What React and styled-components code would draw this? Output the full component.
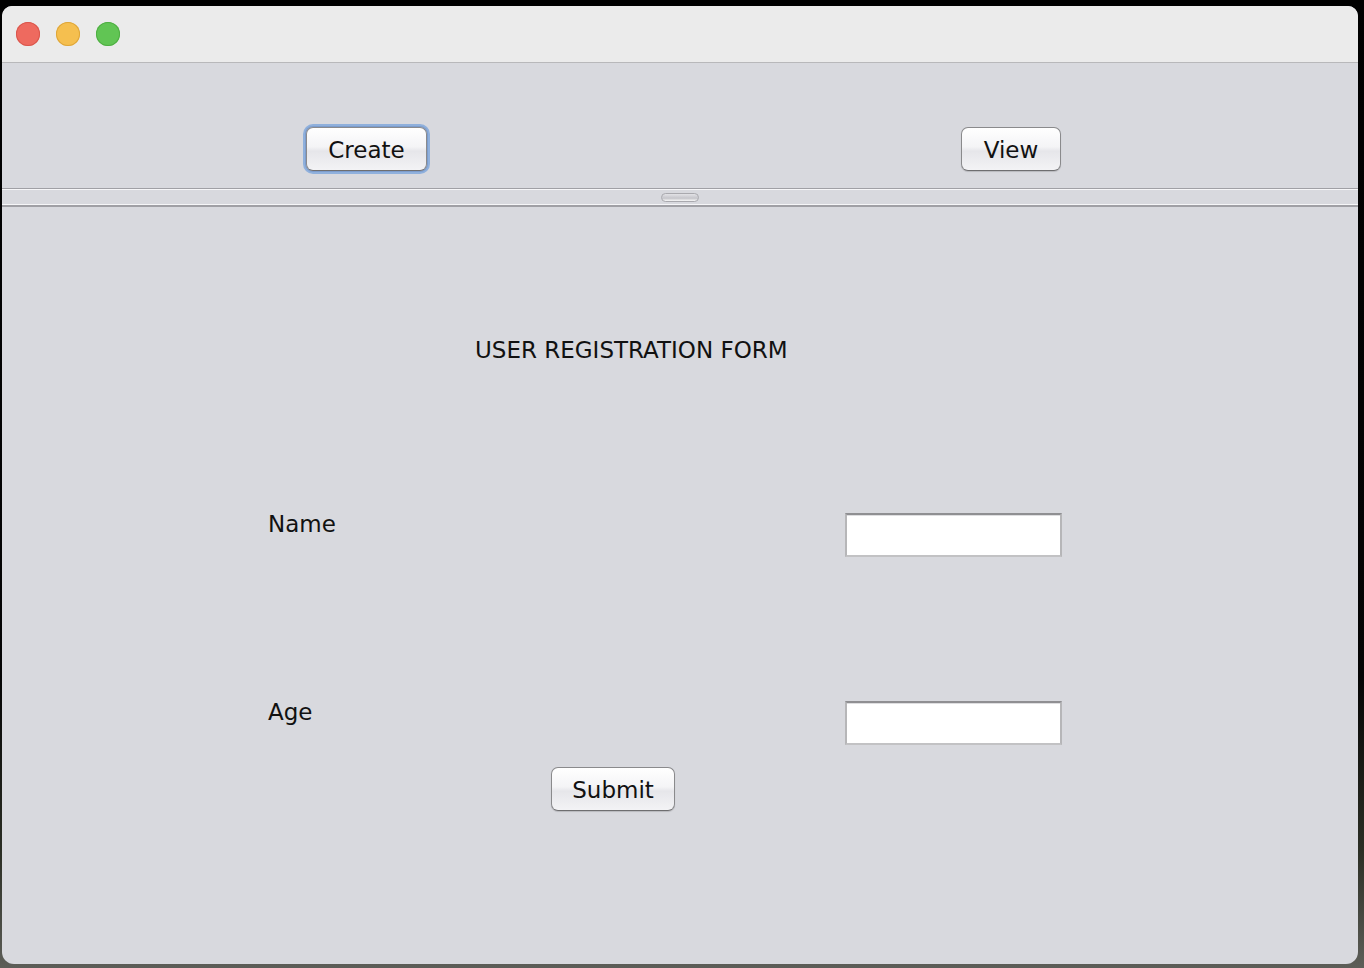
import React from "react";
import styled, { createGlobalStyle } from "styled-components";

const Global = createGlobalStyle`
  html, body { margin: 0; padding: 0; }
  body {
    width: 1364px;
    height: 968px;
    overflow: hidden;
    background: linear-gradient(to bottom, #000 0%, #050505 70%, #2c2f25 88%, #5d5e58 100%);
    font-family: "DejaVu Sans", "Liberation Sans", sans-serif;
  }
  #root { padding: 6px 6px 4px 2px; }
`;

const Window = styled.div`
  width: 1356px;
  height: 958px;
  border-radius: 10px 10px 12px 12px;
  overflow: hidden;
  background: #d8d9de;
  display: flex;
  flex-direction: column;
`;

const TitleBar = styled.div`
  height: 56px;
  flex: none;
  background: #ebebeb;
  border-bottom: 1px solid #b8b8ba;
  display: flex;
  align-items: center;
  padding-left: 14px;
  gap: 16px;
`;

const Light = styled.span`
  width: 24px;
  height: 24px;
  border-radius: 50%;
  background: ${(p) => p.$c};
  box-shadow: inset 0 0 0 1px ${(p) => p.$b};
`;

const TopPane = styled.div`
  height: 125px;
  flex: none;
  display: flex;
  align-items: flex-start;
  padding-top: 64px;
  padding-left: 304px;
  gap: 534px;
  box-sizing: border-box;
`;

const Button = styled.button`
  height: 44px;
  width: ${(p) => p.$w}px;
  box-sizing: border-box;
  border: 1px solid #8a8a8c;
  border-bottom-color: #6e6e70;
  border-radius: 7px;
  background: linear-gradient(to bottom, #ffffff 0%, #f4f4f6 45%, #e6e6ea 55%, #f3f3f5 100%);
  font-family: "DejaVu Sans", "Liberation Sans", sans-serif;
  font-size: 23px;
  color: #111;
  padding: 3px 0 0;
  line-height: 1;
  box-shadow: ${(p) =>
    p.$focus
      ? "0 0 0 1px #7c9ccc, 0 0 0 3px #8fb0dc"
      : "0 1px 1px rgba(0,0,0,0.15)"};
`;

const Divider = styled.div`
  height: 19px;
  flex: none;
  box-sizing: border-box;
  border-top: 1px solid #a0a0a5;
  border-bottom: 2px solid #a0a0a5;
  box-shadow: inset 0 1px 0 #f6f6f8, inset 0 -1px 0 #f6f6f8;
  display: flex;
  align-items: center;
  justify-content: center;
`;

const Handle = styled.div`
  width: 38px;
  height: 9px;
  box-sizing: border-box;
  border-radius: 5px;
  border: 1px solid #a9a9ae;
  background: linear-gradient(to bottom, #e2e2e6 0%, #c5c5ca 60%, #f8f8f8 100%);
  margin-top: 1px;
`;

const FormPane = styled.div`
  flex: 1;
  display: flex;
  flex-direction: column;
  align-items: flex-start;
  padding-left: 266px;
`;

const Heading = styled.div`
  font-size: 23px;
  line-height: 26px;
  color: #111;
  margin-top: 130px;
  margin-left: 207px;
  white-space: nowrap;
`;

const Row = styled.div`
  display: flex;
  align-items: flex-start;
  margin-top: ${(p) => p.$mt}px;
`;

const Label = styled.label`
  width: 577px;
  font-size: 23px;
  line-height: 26px;
  color: #111;
  margin-top: -2px;
`;

const Field = styled.input`
  width: 217px;
  height: 44px;
  box-sizing: border-box;
  border: 2px solid #b6b6b8;
  border-top-color: #8f8f92;
  border-bottom-color: #c2c2c4;
  background: #fff;
  box-shadow: inset 0 1px 0 #dedee0;
  outline: none;
  padding: 0 6px;
  font-size: 20px;
`;

const SubmitWrap = styled.div`
  margin-top: 22px;
  margin-left: 283px;
`;

export default function App() {
  return (
    <>
      <Global />
      <Window>
        <TitleBar>
          <Light $c="#ee6a5f" $b="#d9574d" />
          <Light $c="#f5bf4f" $b="#dea63a" />
          <Light $c="#61c554" $b="#4fae43" />
        </TitleBar>
        <TopPane>
          <Button $w={121} $focus>Create</Button>
          <Button $w={100}>View</Button>
        </TopPane>
        <Divider>
          <Handle />
        </Divider>
        <FormPane>
          <Heading>USER REGISTRATION FORM</Heading>
          <Row $mt={150}>
            <Label>Name</Label>
            <Field type="text" />
          </Row>
          <Row $mt={144}>
            <Label>Age</Label>
            <Field type="text" />
          </Row>
          <SubmitWrap>
            <Button $w={124}>Submit</Button>
          </SubmitWrap>
        </FormPane>
      </Window>
    </>
  );
}
